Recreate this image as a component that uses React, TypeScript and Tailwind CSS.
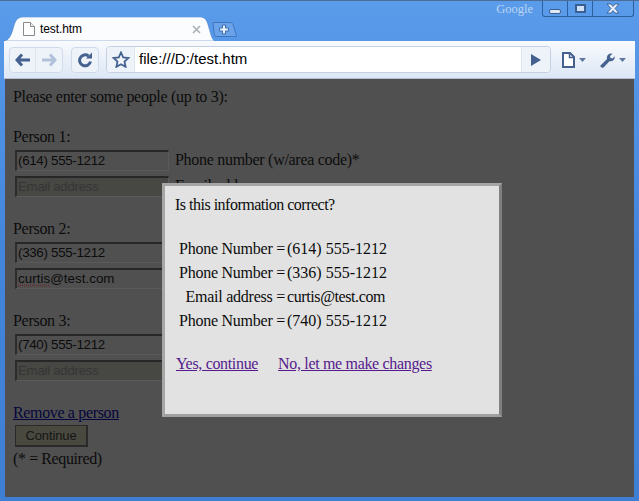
import React from "react";

const Field = ({ value, placeholder, spell }: { value?: string; placeholder?: string; spell?: boolean }) => (
  <div className={`w-[154px] h-[21px] shrink-0 border-2 border-t-[#272727] border-l-[#2c2c2c] border-r-[#595959] border-b-[#5a5a5a] border-r-[1px] border-b-[1px] flex items-center pl-px text-[13.33px] leading-none font-['Liberation_Sans',sans-serif] ${spell ? "tracking-[0.05px]" : "tracking-[-0.3px]"} ${placeholder ? "bg-[#474743] text-[#363636]" : "bg-[#505050] text-[#0c0c0c]"}`}>
    {placeholder ? placeholder : spell ? (<span><span className="underline decoration-dotted decoration-[#6e2a2a] underline-offset-2">curtis</span>@test.com</span>) : value}
  </div>
);

const Person = ({ n, phone, email }: { n: number; phone: string; email?: string }) => (
  <div className="mb-[21px]">
    <div className="h-[18px] leading-[18px]">Person {n}:</div>
    <div className="flex items-center gap-[6px] ml-[2px] mt-px h-[26px]">
      <Field value={phone} />
      <span className="whitespace-nowrap">Phone number (w/area code)*</span>
    </div>
    <div className="flex items-center gap-[6px] ml-[2px] h-[26px]">
      {email ? <Field spell /> : <Field placeholder="Email address" />}
      <span className="whitespace-nowrap">Email address</span>
    </div>
  </div>
);

const Row = ({ a, b, email }: { a: string; b: string; email?: boolean }) => (
  <>
    <div className="text-right whitespace-nowrap tracking-[-0.25px]">{a}</div>
    <div className={`whitespace-nowrap ${email ? "tracking-[-0.4px]" : "tracking-normal"}`}>{b}</div>
  </>
);

export default function App() {
  return (
    <div className="relative w-[639px] h-[501px] overflow-hidden flex flex-col bg-gradient-to-b from-[#5a9bea] via-[#4385dd] to-[#3f7fd3] font-['Liberation_Serif',serif] border-t border-[#4d6d96]">
      <div className="h-[16px] shrink-0 flex justify-end items-start pr-[5px]">
        <span className="mr-[9px] text-[12.5px] leading-[17px] text-[#bcd6f5]">Google</span>
        <div className="flex h-[16px] border border-t-0 border-[#2c5f9e] rounded-b-[3px]">
          <div className="w-[25px] flex items-center justify-center border-r border-[#2c5f9e]"><div className="w-[12px] h-[5px] mt-[5px] bg-[#dfe9f6] border border-[#3a5f93] rounded-[2px]" /></div>
          <div className="w-[25px] flex items-center justify-center border-r border-[#2c5f9e]"><div className="w-[11px] h-[9px] border-2 border-[#3a5f93] bg-[#cfe0f6]" /></div>
          <div className="w-[40px] flex items-center justify-center">
            <svg width="16" height="11" viewBox="0 0 16 11"><path d="M2 1h4l2 2.500L10 1h4L10 5.500l4 4.500h-4L8 7.500 6 10H2l4-4.500z" fill="#e8f0fb" stroke="#3a5f93" strokeWidth="0.9" /></svg>
          </div>
        </div>
      </div>
      <div className="h-[24px] shrink-0 flex items-start pl-[4px]">
        <div className="relative w-[211px] h-[24px] flex items-center pl-[19px] pr-[14px] gap-[5px]">
          <svg className="absolute inset-0" width="211" height="24" viewBox="0 0 211 24"><path d="M0 24C5 23 7 19 9 12 11 4 13 0 19 0H196C202 0 203 4 205 11 207 18 208 23 211 24Z" fill="#fbfcfe" stroke="#3f72b8" strokeWidth="0.5" /></svg>
          <svg className="relative" width="12" height="14" viewBox="0 0 12 14"><path d="M.5.500h7L11.500 4.500v9H.5z" fill="#fff" stroke="#8a8a8a" /><path d="M7.500.5v4h4" fill="#eee" stroke="#8a8a8a" /></svg>
          <span className="relative flex-1 text-[12px] tracking-[-0.1px] text-black font-['Liberation_Sans',sans-serif]">test.htm</span>
          <svg className="relative" width="9" height="9" viewBox="0 0 9 9"><path d="M1 1l7 7M8 1 1 8" stroke="#a8adb4" strokeWidth="1.500" /></svg>
        </div>
        <svg className="-ml-[3px] mt-[5px]" width="25" height="15" viewBox="0 0 25 15"><path d="M1 .5H18C20 .5 21 2 22 5L24.500 14.500H4C3 14.500 2.500 13 2 10Z" fill="#6ba3ea" stroke="#3f76bf" /><path d="M10.500 3h3v3h3v3h-3v3h-3V9h-3V6h3z" fill="#e8f0fb" stroke="#3f6cab" /></svg>
      </div>
      <div className="h-[38px] shrink-0 mx-[4px] bg-gradient-to-b from-[#f8fafd] to-[#dde7f5] flex items-center pl-[5px] border-b border-[#b4c0d1]">
        <div className="flex h-[26px] w-[54px] border border-[#d0dbea] rounded-[4px] bg-[#eef3fa]">
          <div className="w-[27px] flex items-center justify-center border-r border-[#dde5f0]">
            <svg width="16" height="14" viewBox="0 0 16 14"><path d="M7 1.500 2 7l5 5.500M2.500 7H15" fill="none" stroke="#44618f" strokeWidth="3" /></svg>
          </div>
          <div className="w-[27px] flex items-center justify-center">
            <svg width="16" height="14" viewBox="0 0 16 14"><path d="M9 1.500 14 7l-5 5.500M13.500 7H1" fill="none" stroke="#b1c1da" strokeWidth="3" /></svg>
          </div>
        </div>
        <div className="ml-[8px] w-[28px] h-[26px] border border-[#d0dbea] rounded-[4px] bg-[#eef3fa] flex items-center justify-center">
          <svg width="16" height="16" viewBox="0 0 16 16"><path d="M13.500 9.500A5.500 5.500 0 1 1 11.500 4" fill="none" stroke="#44618f" strokeWidth="3" /><path d="M9 6.500h6v-6z" fill="#44618f" /></svg>
        </div>
        <div className="ml-[7px] flex h-[27px] w-[445px] rounded-[4px] border border-[#c5d1e3] bg-white">
          <div className="w-[28px] bg-[#eef3fa] border-r border-[#dde5f0] rounded-l-[4px] flex items-center justify-center">
            <svg width="18" height="17" viewBox="0 0 18 17"><path d="M9 1.500l2.200 4.900 5.300.6-4 3.600 1.100 5.200L9 13.200l-4.600 2.600 1.100-5.200-4-3.600 5.300-.6z" fill="#f4f7fc" stroke="#44618f" strokeWidth="1.800" /></svg>
          </div>
          <div className="flex-1 pl-[4px] flex items-center text-[15px] text-black font-['Liberation_Sans',sans-serif]">file:///D:/test.htm</div>
          <div className="w-[29px] bg-[#eef3fa] border-l border-[#dde5f0] rounded-r-[4px] flex items-center justify-center">
            <svg width="10" height="12" viewBox="0 0 10 12"><path d="M0 0l10 6-10 6z" fill="#44618f" /></svg>
          </div>
        </div>
        <div className="ml-[11px] flex items-center gap-[4px]">
          <svg width="13" height="16" viewBox="0 0 13 16"><path d="M1 1h7l4 4v10H1z" fill="#fff" stroke="#44618f" strokeWidth="2" /><path d="M7.500 1v4.500H12" fill="none" stroke="#44618f" strokeWidth="1.500" /></svg>
          <svg width="7" height="4" viewBox="0 0 7 4"><path d="M0 0h7L3.500 4z" fill="#5d789f" /></svg>
        </div>
        <div className="ml-[13px] flex items-center gap-[3px]">
          <svg width="17" height="16" viewBox="0 0 16 16"><path d="M1 13.500 7.500 7c-.7-2.500 1-5.500 4.500-5.500l1 .2L10.500 4l.5 2 2 .5 2.300-2.300c.3 3.500-2.500 5.800-5.300 5L4 15.500c-1 .8-3.800-.5-3-2z" fill="#44618f" /></svg>
          <svg width="7" height="4" viewBox="0 0 7 4"><path d="M0 0h7L3.500 4z" fill="#5d789f" /></svg>
        </div>
      </div>
      <div className="mx-[5px] h-[418px] shrink-0 bg-[#505050] pl-[8px] pt-[9px] text-[16px] tracking-[-0.29px] text-[#0c0c0c] leading-[18px] overflow-hidden">
        <div className="h-[18px] mb-[22px]">Please enter some people (up to 3):</div>
        <Person n={1} phone="(614) 555-1212" />
        <Person n={2} phone="(336) 555-1212" email="curtis@test.com" />
        <Person n={3} phone="(740) 555-1212" />
        <div className="underline text-[#06063c] h-[18px] tracking-[-0.35px]">Remove a person</div>
        <div className="ml-[2px] mt-[3px] w-[73px] h-[22px] bg-[#49493f] border border-b-2 border-r-2 border-[#2a2a2a] flex items-center justify-center text-[13px] tracking-[-0.1px] text-[#161616] font-['Liberation_Sans',sans-serif]">Continue</div>
        <div className="mt-[3px] tracking-[-0.4px]">(* = Required)</div>
      </div>
      <div className="absolute left-[162px] top-[182px] w-[340px] h-[234px] border-[3px] border-t-[#a6a6a6] border-l-[#a6a6a6] border-r-[#808080] border-b-[#a0a0a0] bg-[#e2e2e2] pl-[10px] pt-[10px] text-[16px] tracking-[-0.5px] text-[#0c0c0c]">
        <div className="h-[18px] leading-[18px]">Is this information correct?</div>
        <div className="mt-[23px] grid grid-cols-[110px_auto] justify-start gap-x-[2px] leading-[24px] w-max">
          <Row a="Phone Number =" b="(614) 555-1212" />
          <Row a="Phone Number =" b="(336) 555-1212" />
          <Row a="Email address =" b="curtis@test.com" email />
          <Row a="Phone Number =" b="(740) 555-1212" />
        </div>
        <div className="mt-[22px] pl-[1px] flex gap-[20px] text-[#551a8b] underline h-[18px] leading-[18px] tracking-[-0.33px]">
          <span>Yes, continue</span><span>No, let me make changes</span>
        </div>
      </div>
    </div>
  );
}
